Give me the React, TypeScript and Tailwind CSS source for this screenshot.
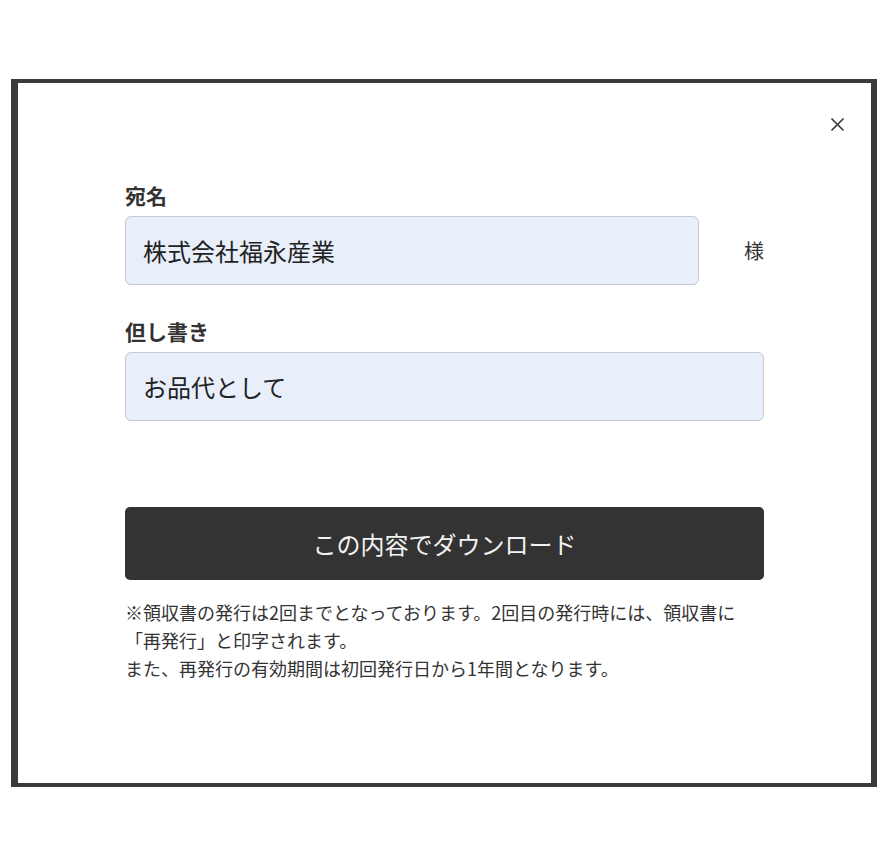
import { useState } from "react";

const fontStack = "font-['Noto_Sans_CJK_JP','Noto_Sans',sans-serif]";

function CloseIcon() {
  return (
    <svg aria-hidden="true" className="size-[15px]" viewBox="0 0 15 15">
      <path d="M1.5 1.5 13.5 13.5M13.5 1.5 1.5 13.5" fill="none" stroke="#3a3a3a" strokeWidth="1.7" />
    </svg>
  );
}

function Field({ label, value, onChange }: { label: string; value: string; onChange: (v: string) => void }) {
  return (
    <div className="flex flex-col">
      <label className="text-[21px] font-bold leading-[30px] text-[#333]">{label}</label>
      <input
        className="mt-[6px] h-[69px] w-full rounded-[6px] border border-[#c5c9d0] bg-[#e8eefa] px-[17px] text-[24px] text-[#222] outline-none"
        onChange={(e) => onChange(e.target.value)}
        value={value}
      />
    </div>
  );
}

export default function App() {
  const [name, setName] = useState("株式会社福永産業");
  const [note, setNote] = useState("お品代として");

  return (
    <div className={`min-h-[867px] bg-white pt-[79px] pl-[11px] ${fontStack}`}>
      <div className="relative h-[708px] w-[866px] border-t-4 border-r-[6px] border-b-4 border-l-[7px] border-[#3b3b3b] bg-white">
        <button aria-label="閉じる" className="absolute top-[34px] right-[26px] flex size-[15px] items-center justify-center">
          <CloseIcon />
        </button>

        <div className="flex flex-col px-[107px] pt-[97px]">
          <div className="flex flex-col">
            <label className="text-[21px] font-bold leading-[30px] text-[#333]">宛名</label>
            <div className="mt-[6px] flex items-center justify-between">
              <input
                className="h-[69px] w-[574px] rounded-[6px] border border-[#c5c9d0] bg-[#e8eefa] px-[17px] text-[24px] text-[#222] outline-none"
                onChange={(e) => setName(e.target.value)}
                value={name}
              />
              <span className="text-[20px] leading-none text-[#333]">様</span>
            </div>
          </div>

          <div className="mt-[31px]">
            <Field label="但し書き" onChange={setNote} value={note} />
          </div>

          <button className="mt-[86px] h-[73px] w-full rounded-[5px] bg-[#333333] text-[24px] text-[#f2f2f2]">
            この内容でダウンロード
          </button>

          <p className="mt-[18px] text-[18px] leading-[28px] text-[#333]">
            ※領収書の発行は2回までとなっております。2回目の発行時には、領収書に
            <br />
            「再発行」と印字されます。
            <br />
            また、再発行の有効期間は初回発行日から1年間となります。
          </p>
        </div>
      </div>
    </div>
  );
}
